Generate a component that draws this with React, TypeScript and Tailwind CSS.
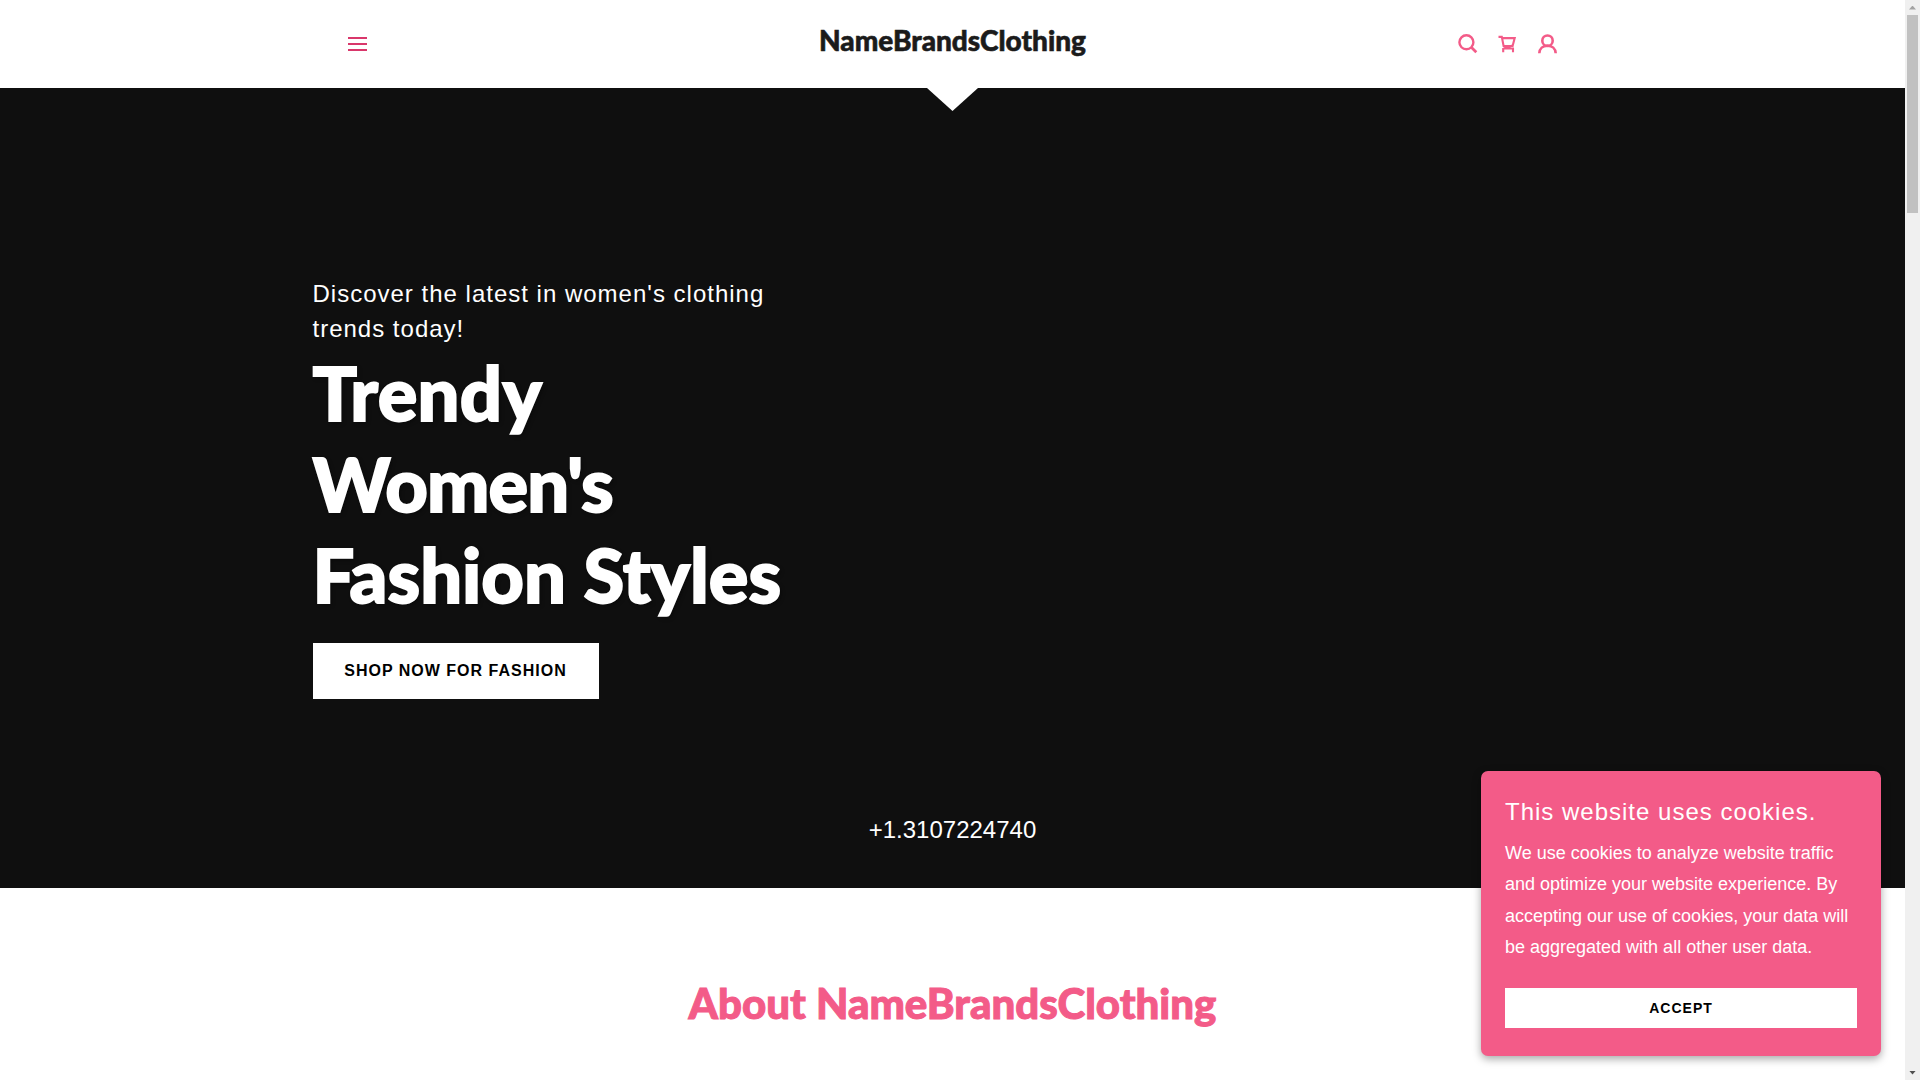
function SearchIcon() {
  return (
    <svg className="size-6" viewBox="0 0 24 24" fill="none" stroke="currentColor" strokeWidth="2.4">
      <circle cx="10.4" cy="10.3" r="7" />
      <path d="M15.3 15.2l5 5" strokeWidth="2.7" />
    </svg>
  );
}

function CartIcon() {
  return (
    <svg className="size-6" viewBox="0 0 24 24" fill="none" stroke="currentColor" strokeWidth="2.1">
      <path d="M2.5 4.9h3.3l1.8 9.1h9l2.1-7.9H6" />
      <path d="M16.7 13.6l-9.1 2.9h10.4M7.2 16v4.3M17 16v4.3" />
    </svg>
  );
}

function UserIcon() {
  return (
    <svg className="size-6" viewBox="0 0 24 24" fill="none" stroke="currentColor" strokeWidth="2.6">
      <circle cx="11.5" cy="8.7" r="5.2" />
      <path d="M3.3 21.3c.2-4.6 3.7-7.6 8.2-7.6s8 3 8.2 7.6" />
    </svg>
  );
}

function Header() {
  return (
    <header className="h-[88px] bg-white">
      <div className="mx-auto flex h-full w-[1280px] items-center justify-between px-8 text-[#f35b88]">
        <div className="w-[104px] pl-px">
          <button className="flex h-6 w-6 flex-col items-center justify-center gap-[3.6px] text-[#d9376b]">
            <span className="h-[2.4px] w-[19px] bg-current" />
            <span className="h-[2.4px] w-[19px] bg-current" />
            <span className="h-[2.4px] w-[19px] bg-current" />
          </button>
        </div>
        <div className="pb-2 font-[Lato,sans-serif] text-[28px] leading-none font-black whitespace-nowrap text-[#1b1b1b] [-webkit-text-stroke:0.6px_currentColor]">
          NameBrandsClothing
        </div>
        <div className="flex gap-4">
          <SearchIcon />
          <CartIcon />
          <UserIcon />
        </div>
      </div>
    </header>
  );
}

function Hero() {
  return (
    <section className="flex h-[800px] flex-col items-center bg-[#0f0f0f] text-white">
      <div className="h-[23px] w-[51px] bg-white [clip-path:polygon(0_0,100%_0,50%_100%)]" />
      <div className="mt-[165px] w-[1280px]">
        <p className="w-[500px] text-2xl leading-[35px] tracking-[1px]">
          Discover the latest in women's clothing trends today!
        </p>
        <h1 className="mt-px font-[Lato,sans-serif] text-[74px] leading-[91px] font-black whitespace-nowrap [-webkit-text-stroke:1.8px_currentColor] text-shadow-[2px_2px_4px_rgba(0,0,0,0.4)]">
          <span className="block tracking-[0.3px]">Trendy</span>
          <span className="block tracking-[-0.9px]">Women's</span>
          <span className="block">Fashion Styles</span>
        </h1>
        <button className="mt-[23px] flex h-14 w-[286px] items-center justify-center bg-white text-base font-bold tracking-[1px] text-black">
          SHOP NOW FOR FASHION
        </button>
      </div>
      <p className="mt-[113px] text-2xl leading-9">+1.3107224740</p>
    </section>
  );
}

function CookieBanner() {
  return (
    <div className="absolute right-[39px] bottom-6 flex h-[285px] w-[400px] flex-col rounded-[7px] bg-[#f35b88] px-6 pt-[23px] text-white shadow-[0_3px_8px_rgba(0,0,0,0.35)]">
      <h4 className="text-2xl leading-9 tracking-[1px]">This website uses cookies.</h4>
      <p className="mt-[7.5px] text-lg leading-[31.5px]">
        We use cookies to analyze website traffic and optimize your website experience. By accepting our use of
        cookies, your data will be aggregated with all other user data.
      </p>
      <button className="mt-[24.5px] h-10 bg-white text-sm font-bold tracking-[1px] text-black">ACCEPT</button>
    </div>
  );
}

function Scrollbar() {
  return (
    <div className="flex h-full w-[15px] flex-col items-center bg-[#f0f0f0]">
      <div className="flex h-[15px] items-center justify-center">
        <div className="h-1 w-[7px] bg-[#a3a3a3] [clip-path:polygon(50%_0,100%_100%,0_100%)]" />
      </div>
      <div className="h-[198px] w-[11px] bg-[#c1c1c1]" />
      <div className="mt-auto flex h-[15px] items-center justify-center">
        <div className="h-1 w-[7px] bg-[#505050] [clip-path:polygon(0_0,100%_0,50%_100%)]" />
      </div>
    </div>
  );
}

export default function App() {
  return (
    <div className="relative flex h-[1080px] w-[1920px] overflow-hidden bg-white font-['Liberation_Sans',Arial,sans-serif]">
      <main className="w-[1905px]">
        <Header />
        <Hero />
        <section className="pt-[89px] text-center">
          <h2 className="font-[Lato,sans-serif] text-[42px] leading-[52px] font-black text-[#f35b88] [-webkit-text-stroke:1px_currentColor]">
            About NameBrandsClothing
          </h2>
        </section>
      </main>
      <Scrollbar />
      <CookieBanner />
    </div>
  );
}
